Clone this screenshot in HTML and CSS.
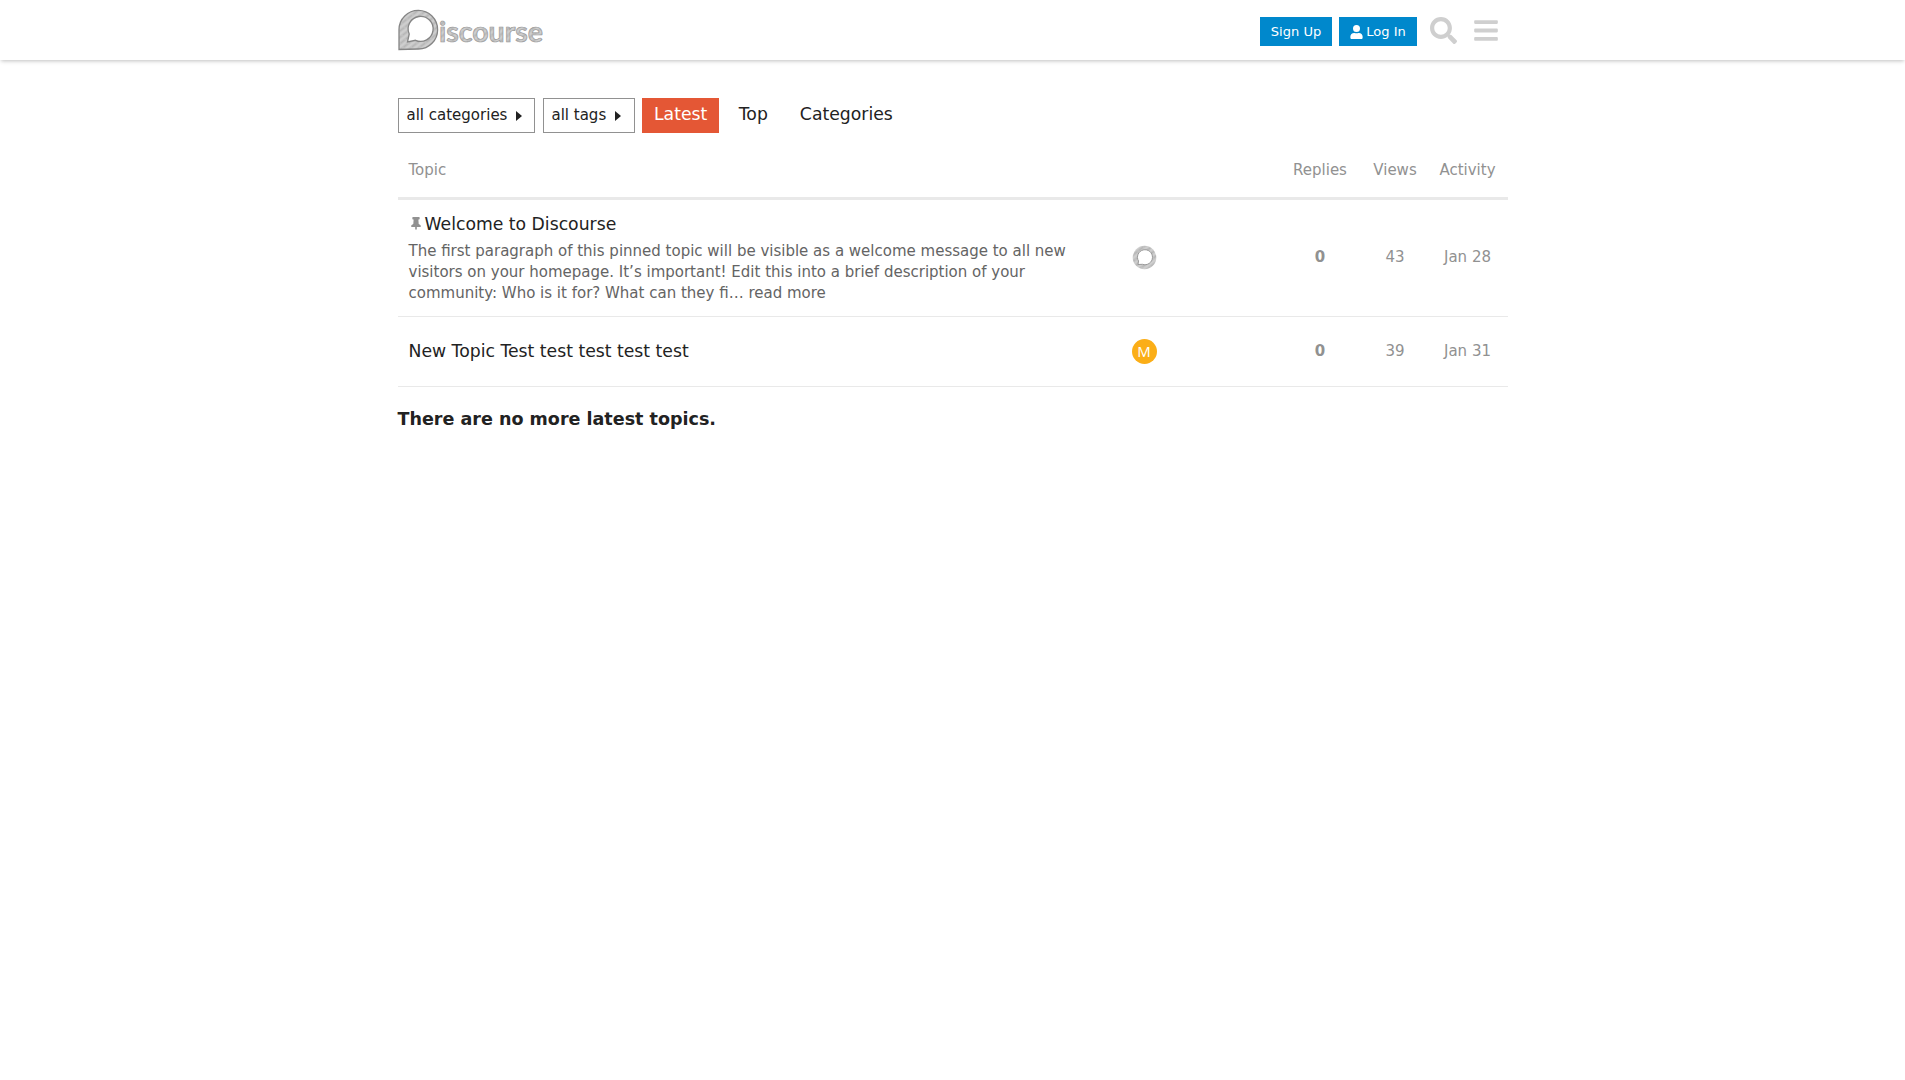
FILE: index.html
```html
<!DOCTYPE html>
<html lang="en">
<head>
<meta charset="utf-8">
<title>Discourse</title>
<link rel="stylesheet" href="styles.css">
</head>
<body>
<header class="site-header">
  <div class="wrap header-row">
    <a class="logo">
      <svg width="148" height="44" viewBox="0 0 148 44" role="img" aria-label="Discourse">
        <defs>
          <pattern id="hatch" width="5" height="7" patternUnits="userSpaceOnUse" patternTransform="rotate(52)">
            <rect width="5" height="7" fill="#c2c2c2"/>
            <path d="M1 0V7" stroke="#dadada" stroke-width="1"/>
            <path d="M3.500 0V5" stroke="#b2b2b2" stroke-width=".8"/>
          </pattern>
        </defs>
        <path d="M1 40.500V20.500A19.300 19.300 0 1 1 20.500 40Z" fill="url(#hatch)" stroke="#858585" stroke-width="1.300"/>
        <path d="M9.500 33L11.200 25A12.500 12.500 0 1 1 17.500 31.300Z" fill="#fff" stroke="#858585" stroke-width="1.300"/>
        <text class="wordmark" x="41" y="32.500" textLength="104" lengthAdjust="spacingAndGlyphs">iscourse</text>
      </svg>
    </a>
    <nav class="panel">
      <button class="btn signup">Sign Up</button>
      <button class="btn login"><svg width="13" height="14" viewBox="0 0 448 512"><path fill="currentColor" d="M224 256a128 128 0 1 0 0-256 128 128 0 0 0 0 256zm90 32h-17a174 174 0 0 1-146 0h-17C60 288 0 348 0 422v42c0 27 21 48 48 48h352c27 0 48-21 48-48v-42c0-74-60-134-134-134z"/></svg>Log In</button>
      <a class="head-icon search"><svg width="27" height="27" viewBox="0 0 512 512"><path fill="currentColor" d="M505 442.700 405.300 343c-4.500-4.500-10.600-7-17-7H372c27.600-35.300 44-79.700 44-128C416 93.100 322.900 0 208 0S0 93.100 0 208s93.100 208 208 208c48.300 0 92.700-16.400 128-44v16.300c0 6.400 2.500 12.500 7 17l99.700 99.700c9.400 9.400 24.600 9.400 33.900 0l28.300-28.300c9.400-9.400 9.400-24.600.1-34zM208 336c-70.700 0-128-57.200-128-128 0-70.700 57.200-128 128-128 70.700 0 128 57.200 128 128 0 70.700-57.200 128-128 128z"/></svg></a>
      <a class="head-icon"><svg width="24" height="27" viewBox="0 0 448 512"><path fill="currentColor" d="M16 132h416c8.800 0 16-7.200 16-16V76c0-8.800-7.200-16-16-16H16C7.200 60 0 67.200 0 76v40c0 8.800 7.200 16 16 16zm0 160h416c8.800 0 16-7.200 16-16v-40c0-8.800-7.200-16-16-16H16c-8.800 0-16 7.200-16 16v40c0 8.800 7.200 16 16 16zm0 160h416c8.800 0 16-7.200 16-16v-40c0-8.800-7.200-16-16-16H16c-8.800 0-16 7.200-16 16v40c0 8.800 7.200 16 16 16z"/></svg></a>
    </nav>
  </div>
</header>
<main class="wrap">
  <nav class="filters">
    <div class="combo categories">all categories<i class="caret"></i></div>
    <div class="combo tags">all tags<i class="caret"></i></div>
    <a class="pill active">Latest</a>
    <a class="pill">Top</a>
    <a class="pill">Categories</a>
  </nav>
  <table class="topics">
    <colgroup><col class="c-topic"><col class="c-posters"><col class="c-replies"><col class="c-views"><col class="c-activity"></colgroup>
    <thead>
      <tr><th class="left">Topic</th><th></th><th>Replies</th><th>Views</th><th class="activity">Activity</th></tr>
    </thead>
    <tbody>
      <tr class="pinned">
        <td class="left">
          <div class="title"><svg class="pin" width="10" height="13" viewBox="0 0 384 512"><path fill="currentColor" d="M298 278l-12-182h26c13 0 24-11 24-24V24c0-13-11-24-24-24H72C59 0 48 11 48 24v48c0 13 11 24 24 24h26L86 278C39 298 0 330 0 368c0 13 11 24 24 24h136v80l32 40 32-40v-80h136c13 0 24-11 24-24 0-38-39-70-86-90z"/></svg>Welcome to Discourse</div>
          <p class="excerpt">The first paragraph of this pinned topic will be visible as a welcome message to all new visitors on your homepage. It’s important! Edit this into a brief description of your community: Who is it for? What can they fi… read more</p>
        </td>
        <td><svg class="avatar" width="25" height="25" viewBox="0 0 25 25"><circle cx="12.500" cy="12.500" r="11.800" fill="url(#hatch)"/><path d="M6 19.500L6.500 16A7.500 7.500 0 1 1 10.500 19.300Z" fill="#fff" stroke="#999" stroke-width="1"/></svg></td>
        <td class="replies">0</td><td>43</td><td class="activity">Jan 28</td>
      </tr>
      <tr class="plain">
        <td class="left"><div class="title">New Topic Test test test test test</div></td>
        <td><span class="avatar letter">M</span></td>
        <td class="replies">0</td><td>39</td><td class="activity">Jan 31</td>
      </tr>
    </tbody>
  </table>
  <h3 class="end">There are no more latest topics.</h3>
</main>
</body>
</html>
```
FILE: styles.css
```css
* { box-sizing: border-box; }
body {
  margin: 0;
  background: #fff;
  color: #222;
  font: 15px/1.4 "DejaVu Sans", sans-serif;
}
.wrap { width: 1110px; margin: 0 auto; }
.site-header {
  height: 60px;
  box-shadow: 0 2px 4px -1px rgba(0, 0, 0, .25);
}
.header-row { height: 60px; display: flex; justify-content: space-between; }
.logo { display: block; padding-top: 9px; height: 60px; }
.logo svg { display: block; }
.wordmark {
  font: 700 28px Lato, sans-serif;
  fill: url(#hatch);
  stroke: #999;
  stroke-width: .7px;
}
.panel { display: flex; padding: 17px 10px 0 0; }
.btn {
  height: 29px;
  padding: 0 0 0 1px;
  border: 0;
  background: #08c;
  color: #fff;
  font: 13.060px/29px "DejaVu Sans", sans-serif;
  display: flex;
  align-items: center;
  justify-content: center;
}
.btn svg { margin-right: 3px; }
.signup { width: 72px; margin-right: 7px; }
.login { width: 78px; margin-right: 13px; }
.head-icon { color: #cfcfcf; }
.head-icon svg { display: block; }
.search { margin-right: 17px; }
.filters { display: flex; height: 35px; margin-top: 38px; }
.combo {
  height: 35px;
  border: 1px solid #919191;
  padding: 0 12px 0 8px;
  display: flex;
  align-items: center;
  justify-content: space-between;
}
.categories { width: 137px; margin-right: 8px; }
.tags { width: 92px; margin-right: 7px; padding-right: 13px; }
.caret {
  border: 5px solid transparent;
  border-left: 6px solid #222;
  border-right: 0;
  margin-top: 1px;
}
.pill {
  height: 35px;
  padding: 4px 12px 0;
  margin-right: 8px;
  font-size: 17.240px;
}
.active { background: #e45735; color: #fff; padding-left: 12.500px; padding-right: 11.500px; }
.topics {
  width: 1110px;
  table-layout: fixed;
  border-collapse: collapse;
  color: #919191;
}
.c-topic { width: 734px; }
.c-posters { width: 151px; }
.c-replies { width: 75px; }
.c-views { width: 75px; }
.c-activity { width: 75px; }
th, td { padding: 0; text-align: center; font-weight: 400; }
.left { text-align: left; padding-left: 11px; }
.activity { padding-right: 5px; }
thead tr { height: 65px; border-bottom: 3px solid #e9e9e9; }
thead th { padding-top: 11px; }
tbody tr { border-bottom: 1px solid #e9e9e9; }
.pinned { height: 118px; }
.plain { height: 70px; }
.title { color: #222; font-size: 17.240px; line-height: 24px; }
.pin { margin: 0 4px 0 2px; color: #919191; vertical-align: 0; }
.excerpt { margin: 5px 0 0; width: 665px; color: #646464; line-height: 21px; }
.replies { font-weight: 700; }
.avatar { display: block; margin: 0; }
.letter {
  width: 25px;
  height: 25px;
  border-radius: 50%;
  background: #fbae17;
  color: #fff;
  font: 15px/25px "Open Sans", sans-serif;
  text-align: center;
}
.end { margin: 20px 0 0; font-size: 17.550px; line-height: 24px; }
```
